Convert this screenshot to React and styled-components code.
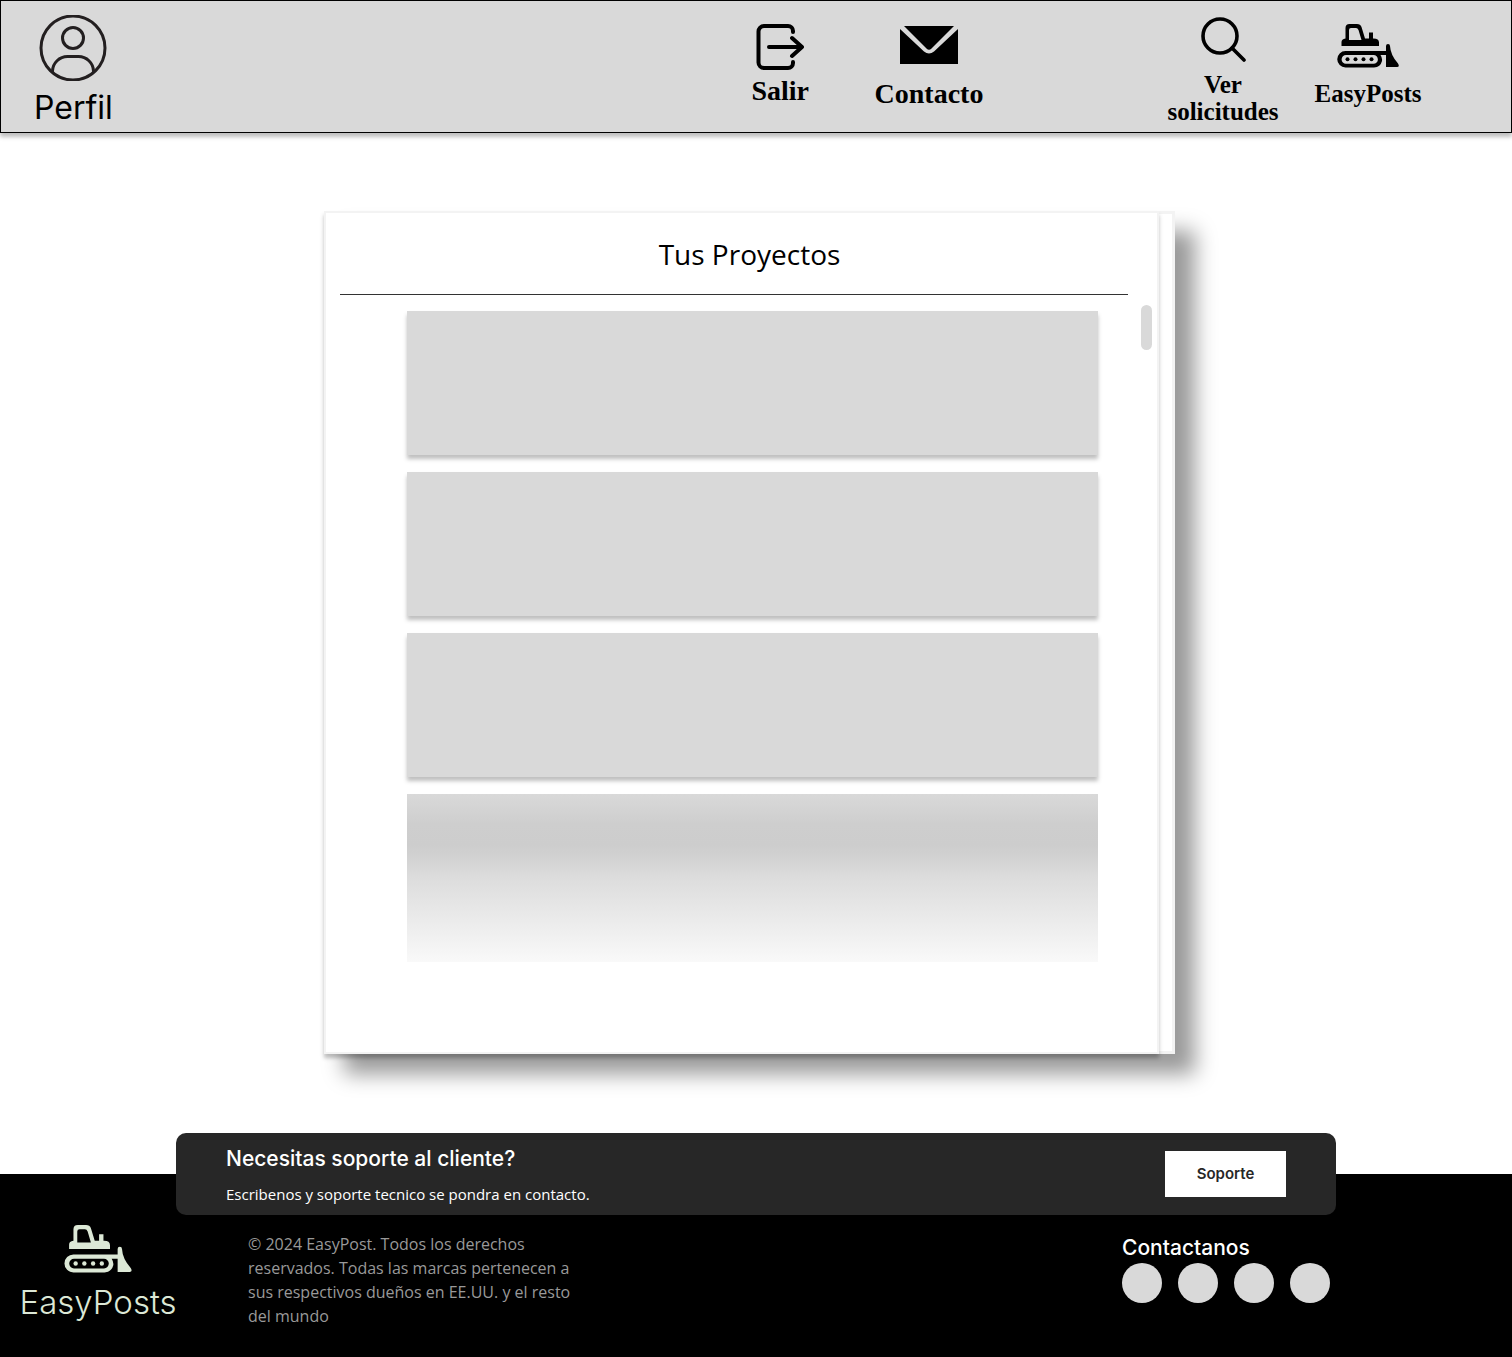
import React from "react";
import styled, { createGlobalStyle } from "styled-components";

const sans = '"Inter", "Liberation Sans", sans-serif';
const text = '"Open Sans", "Noto Sans", sans-serif';
const serif = '"Liberation Serif", "DejaVu Serif", serif';

const GlobalStyle = createGlobalStyle`
  *, *::before, *::after { box-sizing: border-box; }
  body { margin: 0; background: #fff; color: #000; font-family: ${text}; }
  h1, h2, p, ul { margin: 0; padding: 0; }
  ul { list-style: none; }
  a { color: inherit; text-decoration: none; }
`;

const Page = styled.div`
  display: flex;
  flex-direction: column;
  min-height: 100vh;
`;

const Header = styled.header`
  display: flex;
  align-items: flex-start;
  justify-content: space-between;
  height: 133px;
  padding: 14px 87px 0 33px;
  background: #d9d9d9;
  border: 1px solid #000;
  box-shadow: 0 4px 4px rgba(0, 0, 0, 0.25);
`;

const Nav = styled.nav`
  display: flex;
  align-items: flex-start;
`;

const NavGroup = styled.div`
  display: flex;
  align-items: flex-start;
  gap: ${(p) => p.$gap}px;
  & + & { margin-left: 178px; }
`;

const NavLink = styled.a`
  display: flex;
  flex-direction: column;
  align-items: center;
  gap: ${(p) => p.$gap}px;
  min-width: ${(p) => (p.$wide ? "112px" : "0")};
  padding-top: ${(p) => (p.$single ? "9px" : "0")};
  text-align: center;
  font: 700 ${(p) => (p.$small ? "25px/27px" : "28px/36px")} ${serif};
`;

const ProfileLink = styled(NavLink)`
  font: 400 32px/40px ${sans};
`;

const NavLabel = styled.span`
  max-width: 120px;
`;

const Icon = styled.svg`
  display: block;
  flex: none;
`;

const Main = styled.main`
  display: flex;
  justify-content: center;
  flex: 1;
  padding: 78px 13px 120px 0;
`;

const Card = styled.section`
  width: 851px;
  max-width: 100%;
  padding-right: 13px;
  background: #fff;
  border: solid #f3f3f3;
  border-width: 0 3px 0 0;
  box-shadow: inset 0 3px #f3f3f3, inset 0 -3px #f3f3f3, 20px 20px 20px rgba(0, 0, 0, 0.4);
`;

const Panel = styled.div`
  height: 843px;
  background: #fff;
  border: 2px solid #f3f3f3;
  box-shadow: 0 4px 4px rgba(0, 0, 0, 0.25);
`;

const Title = styled.h1`
  padding: 22px 0 21px 16px;
  font: 400 28px/38px ${text};
  text-align: center;
`;

const Rule = styled.hr`
  height: 1px;
  margin: 0 29px 0 14px;
  border: 0;
  background: #333;
`;

const Scroller = styled.div`
  display: flex;
  align-items: flex-start;
  gap: 43px;
  padding: 10px 5px 0 81px;
`;

const Projects = styled.ul`
  display: grid;
  flex: 1;
  gap: 17px;
  padding-top: 6px;
`;

const Project = styled.li`
  height: ${(p) => (p.$fading ? 168 : 144)}px;
  background: ${(p) =>
    p.$fading
      ? "linear-gradient(#d9d9d9 0%, #cecece 18%, #cdcdcd 30%, #d1d1d1 37%, #dcdcdc 49%, #f9f9f9 100%)"
      : "#d9d9d9"};
  box-shadow: ${(p) => (p.$fading ? "none" : "0 4px 4px rgba(0, 0, 0, 0.25)")};
`;

const Thumb = styled.div`
  width: 11px;
  height: 45px;
  border-radius: 6px;
  background: #d9d9d9;
`;

const Footer = styled.footer`
  background: #000;
  color: #fff;
`;

const Support = styled.section`
  display: flex;
  align-items: center;
  justify-content: space-between;
  max-width: 1160px;
  height: 82px;
  margin: -41px auto 0;
  padding: 0 50px;
  border-radius: 10px;
  background: #272727;
`;

const SupportCopy = styled.div`
  display: grid;
  gap: 8px;
  padding-top: 2px;
`;

const Heading = styled.h2`
  font: 500 21px/30px ${sans};
`;

const SupportText = styled.p`
  font: 400 15px/24px ${text};
`;

const SupportButton = styled.button`
  width: 121px;
  height: 46px;
  border: 0;
  background: #fff;
  color: #272727;
  font: 600 15px/24px ${sans};
`;

const FooterRow = styled.div`
  display: flex;
  align-items: flex-start;
  min-height: 142px;
  padding: 0 182px 0 20px;
`;

const Brand = styled.a`
  display: flex;
  flex-direction: column;
  align-items: center;
  gap: 9px;
  width: 156px;
  padding-top: 10px;
  color: #dce8d6;
  font: 300 33px/40px ${sans};
`;

const Legal = styled.p`
  width: 330px;
  margin-left: 72px;
  padding-top: 17px;
  color: #999;
  font: 400 16px/24px ${text};
`;

const Contact = styled.div`
  margin-left: auto;
  padding-top: 18px;
`;

const Socials = styled.ul`
  display: flex;
  gap: 16px;
`;

const SocialLink = styled.a`
  display: block;
  width: 40px;
  height: 40px;
  border-radius: 50%;
  background: #d9d9d9;
`;

const UserIcon = () => (
  <Icon width="68" height="66" viewBox="0 0 68 66" fill="none" stroke="#231f20" strokeWidth="3" aria-hidden="true">
    <ellipse cx="34" cy="33" rx="32" ry="32" />
    <circle cx="34" cy="23" r="10.5" />
    <path d="M13.500 57V56a15 15 0 0 1 15-14.500h11a15 15 0 0 1 15 14.500V57" />
  </Icon>
);

const ExitIcon = () => (
  <Icon width="48" height="46" viewBox="0 0 48 46" fill="none" stroke="#000" strokeWidth="4" strokeLinecap="round" strokeLinejoin="round" aria-hidden="true">
    <path d="M37 8V7a5 5 0 0 0-5-5H8a5.500 5.500 0 0 0-5.500 5.500v31A5.500 5.500 0 0 0 8 44h24a5 5 0 0 0 5-5v-1" />
    <path d="M13 23h32M36 14l10 9-10 9" />
  </Icon>
);

const MailIcon = () => (
  <Icon width="60" height="40" viewBox="0 -2 60 40" aria-hidden="true">
    <path d="M5 0h50L32.500 22.500q-2.500 2.500-5 0z" />
    <path d="M1 3l24 22.500q5 4 10 0L59 3v35H1z" />
  </Icon>
);

const SearchIcon = () => (
  <Icon width="46" height="48" viewBox="0 -2 46 48" fill="none" stroke="#000" strokeWidth="3.600" strokeLinecap="round" aria-hidden="true">
    <circle cx="20" cy="19" r="17" />
    <path d="M32 31l12 12" />
  </Icon>
);

const DozerIcon = ({ width, height }) => (
  <Icon width={width} height={height} viewBox="0 0 62 44" fill="currentColor" aria-hidden="true">
    <path fillRule="evenodd" d="M4.500 22v-4q0-3 4-3.500V4q0-4 4-4h7.500q3.500 0 4.500 3l3.500 11.500h4V8.500h4v6h.5q5.500 0 5.500 4V22zM12 16h12.500l-3-10q-.8-2-2.500-2h-5q-2 0-2 2z" />
    <path fillRule="evenodd" d="M8.500 27H49v-5q0-2 2-2t2 2q.5 9 8 17.500 2 3.500-1 3.500H49V31h-5.500q2 3 1.500 6-1.500 6-8 6.500H8.500a8.250 8.250 0 0 1 0-16.500zM9 31a4.300 4.300 0 0 0 0 8.800h27.500a4.300 4.300 0 0 0 0-8.800z" />
    <circle cx="10.500" cy="35.300" r="2" />
    <circle cx="18.500" cy="35.300" r="2" />
    <circle cx="26.500" cy="35.300" r="2" />
    <circle cx="34.500" cy="35.300" r="2" />
  </Icon>
);

const projects = ["a", "b", "c"];
const networks = ["Facebook", "Instagram", "X", "LinkedIn"];

export default function App() {
  return (
    <Page>
      <GlobalStyle />
      <Header>
        <ProfileLink href="#perfil" $gap={7}>
          <UserIcon />
          <NavLabel>Perfil</NavLabel>
        </ProfileLink>
        <Nav>
          <NavGroup $gap={64}>
            <NavLink href="#salir" $gap={3} $single>
              <ExitIcon />
              <NavLabel>Salir</NavLabel>
            </NavLink>
            <NavLink href="#contacto" $gap={12} $single $wide>
              <MailIcon />
              <NavLabel>Contacto</NavLabel>
            </NavLink>
          </NavGroup>
          <NavGroup $gap={29}>
            <NavLink href="#solicitudes" $gap={8} $small $wide>
              <SearchIcon />
              <NavLabel>Ver solicitudes</NavLabel>
            </NavLink>
            <NavLink href="#inicio" $gap={12} $small $single $wide>
              <DozerIcon width={62} height={44} />
              <NavLabel>EasyPosts</NavLabel>
            </NavLink>
          </NavGroup>
        </Nav>
      </Header>
      <Main>
        <Card>
          <Panel>
            <Title>Tus Proyectos</Title>
            <Rule />
            <Scroller>
              <Projects>
                {projects.map((id) => (
                  <Project key={id} />
                ))}
                <Project $fading />
              </Projects>
              <Thumb />
            </Scroller>
          </Panel>
        </Card>
      </Main>
      <Footer>
        <Support>
          <SupportCopy>
            <Heading>Necesitas soporte al cliente?</Heading>
            <SupportText>Escribenos y soporte tecnico se pondra en contacto.</SupportText>
          </SupportCopy>
          <SupportButton type="button">Soporte</SupportButton>
        </Support>
        <FooterRow>
          <Brand href="#inicio">
            <DozerIcon width={68} height={48} />
            EasyPosts
          </Brand>
          <Legal>
            © 2024 EasyPost. Todos los derechos reservados. Todas las marcas pertenecen a sus respectivos dueños en
            EE.UU. y el resto del mundo
          </Legal>
          <Contact>
            <Heading>Contactanos</Heading>
            <Socials>
              {networks.map((name) => (
                <li key={name}>
                  <SocialLink href="#contacto" aria-label={name} />
                </li>
              ))}
            </Socials>
          </Contact>
        </FooterRow>
      </Footer>
    </Page>
  );
}
